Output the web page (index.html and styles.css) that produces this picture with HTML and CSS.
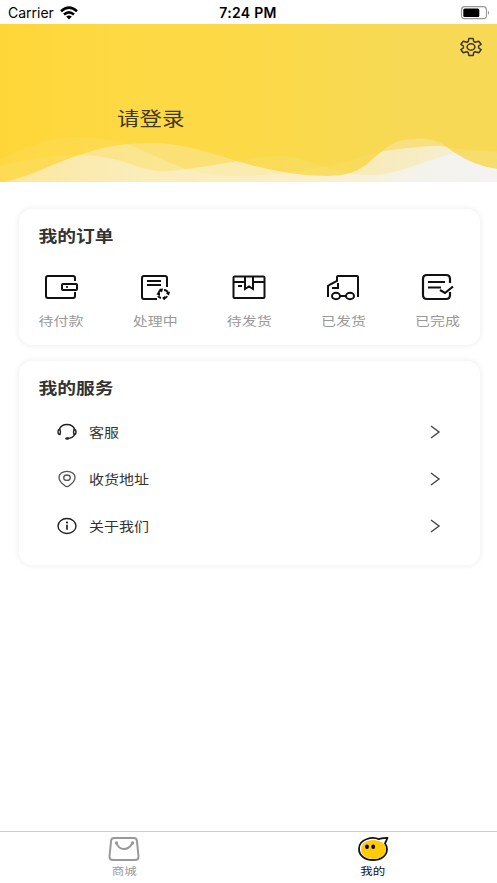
FILE: index.html
```html
<!DOCTYPE html>
<html lang="zh-CN">
<head>
<meta charset="utf-8">
<meta name="viewport" content="width=device-width, initial-scale=1">
<title>我的</title>
<link rel="stylesheet" href="styles.css">
</head>
<body>
<div class="app">
  <header class="status">
    <div class="carrier"><span>Carrier</span>
      <svg width="18" height="14" viewBox="0 0 18 14"><g fill="none" stroke="#000" stroke-width="2.6"><path d="M1 5.2Q9-1.8 17 5.2"/><path d="M4 8.500Q9 4.200 14 8.500"/></g><path d="M6.200 10.500Q9 8.400 11.800 10.500L9 13.500Z"/></svg>
    </div>
    <div class="time">7:24 PM</div>
    <div class="battery"><svg width="30" height="14" viewBox="0 0 30 14"><rect x="1.5" y=".7" width="25" height="12" rx="3.5" fill="none" stroke="#999" stroke-width="1.2"/><rect x="3.3" y="2.6" width="16" height="8.3" rx="1.5"/><path d="M28 4.700q2 2 0 4z" fill="#888"/></svg></div>
  </header>

  <section class="hero">
    <svg class="waves" viewBox="0 0 497 158" preserveAspectRatio="none">
      <defs>
        <path id="front" d="M5 158C35 151 55 138 80 131C100 123 125 119 150 119C185 119 210 129 247 140C280 149 305 152 327 152C360 152 367 139 380 129C390 119 402 115 414 115C440 112 448 126 460 132C470 138 482 143 497 145V158Z"/>
        <path id="middle" d="M0 142C25 136 50 131 77 131C95 131 115 134 133 141C145 145 152 147 165 147C190 146 210 141 233 138C250 134 262 132 279 132C300 132 310 139 325 143C340 148 355 151 370 151C395 151 410 142 447 131C463 127 480 125 497 129V158H0Z"/>
        <path id="back" d="M0 135C30 122 45 115 70 113C95 113 110 115 123 119C150 128 170 141 193 147C215 152 235 153 250 152C285 150 320 145 357 134C370 130 378 129 384 127C405 124 425 122 440 122C455 124 475 127 497 127V158H0Z"/>
        <clipPath id="inside"><use href="#front"/></clipPath>
        <linearGradient id="gb" gradientUnits="userSpaceOnUse" x1="0" x2="497" y1="0" y2="0"><stop offset="0" stop-color="#faf4df" stop-opacity=".25"/><stop offset=".3" stop-color="#faf4df" stop-opacity=".5"/><stop offset=".6" stop-color="#faf4df" stop-opacity=".5"/><stop offset=".85" stop-color="#f4f3f2" stop-opacity=".85"/><stop offset="1" stop-color="#f4f3f2" stop-opacity=".95"/></linearGradient>
        <linearGradient id="gc" gradientUnits="userSpaceOnUse" x1="0" x2="497" y1="0" y2="0"><stop offset="0" stop-color="#faf4df" stop-opacity=".04"/><stop offset=".4" stop-color="#faf4df" stop-opacity=".25"/><stop offset=".8" stop-color="#f6f2e4" stop-opacity=".6"/><stop offset="1" stop-color="#f4f3f2" stop-opacity=".8"/></linearGradient>
      </defs>
      <use href="#back" fill="#faf4df" fill-opacity=".08"/>
      <use href="#middle" fill="#faf4df" fill-opacity=".1"/>
      <use href="#front" fill="#f9f1da" fill-opacity=".33"/>
      <g clip-path="url(#inside)"><use href="#back" fill="url(#gc)"/><use href="#middle" fill="url(#gb)"/></g>
    </svg>
    <button class="settings" aria-label="设置"><svg width="24" height="20" viewBox="0 0 24 20"><g fill="none" stroke="#3f371c" stroke-width="1.5" stroke-linejoin="round"><path d="M9.800 1.500h4.400l.5 3 1.500.7 3.500-1 2.400 3.100-2.500 1.700v2l2.500 1.700-2.400 3.100-3.500-1-1.500.7-.5 3H9.800l-.5-3-1.500-.7-3.500 1-2.400-3.100 2.500-1.700V9L1.900 7.300l2.400-3.100 3.500 1 1.500-.7Z"/><ellipse cx="12" cy="10" rx="3.900" ry="3.200"/></g></svg></button>
    <div class="login">请登录</div>
  </section>

  <main>
    <section class="card orders">
      <h2>我的订单</h2>
      <div class="order-row">
        <a class="order"><svg width="36" height="30" viewBox="0 0 36 30"><g fill="none" stroke="#111" stroke-width="2"><path d="M32 9V6q0-2-2-2H5Q3 4 3 6v18q0 2 2 2h25q2 0 2-2v-4"/><rect x="19" y="12" width="15" height="6" rx="1"/></g><circle cx="24" cy="15" r="1"/></svg><span>待付款</span></a>
        <a class="order"><svg width="36" height="30" viewBox="0 0 36 30"><g fill="none" stroke="#111" stroke-width="2"><path d="M30 15V6q0-2-2-2H7Q5 4 5 6v19q0 2 2 2h13M10 9h14M10 13h14"/></g><g fill="none" stroke="#111" stroke-width="2"><path d="M21 22q1-3 3-4M27 18q3 0 4 3M30 24q-1 2.500-4 2.500M24 26q-2-.5-3-2"/></g><path d="M22 17l4-.5-1 4zM29 21.500l4-2-1 4zM28 24v4l-3-2zM19 22l4-1 0 3z"/></svg><span>处理中</span></a>
        <a class="order"><svg width="36" height="30" viewBox="0 0 36 30"><g fill="none" stroke="#111" stroke-width="2"><rect x="2.500" y="4.500" width="31" height="21.500" rx="1"/><path d="M2 10h12M22 10h12M14 4v13l4-2.500 4 2.500V4M7 14h4"/></g></svg><span>待发货</span></a>
        <a class="order"><svg width="36" height="30" viewBox="0 0 36 30"><g fill="none" stroke="#111" stroke-width="2"><path d="M3 25V14l2-1.500L12 9V5q0-1 1-1h19q1 0 1 1v20M13 11v5H7M15 24h6"/><ellipse cx="11" cy="24" rx="4" ry="3.200"/><ellipse cx="25" cy="24" rx="4" ry="3.200"/></g></svg><span>已发货</span></a>
        <a class="order"><svg width="36" height="30" viewBox="0 0 36 30"><g fill="none" stroke="#111" stroke-width="2.200"><path d="M30 11V7q0-4-4-4H7Q3 3 3 7v16q0 4 4 4h19q4 0 4-4v-3"/><path d="M8 10h17M8 15.500h13" stroke-width="1.900"/><path d="M20 18l5 3L33 14.500"/></g></svg><span>已完成</span></a>
      </div>
    </section>

    <section class="card services">
      <h2>我的服务</h2>
      <a class="service"><svg class="icon" width="22" height="18" viewBox="0 0 22 18"><g fill="none" stroke="#222" stroke-width="1.400"><path d="M3 7Q5 1.500 11 1.500T19 7M19 11Q17 15.500 11 15.500"/><path d="M4 6.500Q2 6.500 2 9t2 2.500q1-2.500 0-5zM18 6.500q2 0 2 2.500t-2 2.500q-1-2.500 0-5z"/></g><ellipse cx="11.200" cy="15.500" rx="2" ry="1.200" fill="#222"/></svg><span>客服</span><svg class="arrow" width="12" height="16" viewBox="0 0 12 16"><path d="M2 2l8 6-8 6"/></svg></a>
      <a class="service"><svg class="icon" width="22" height="18" viewBox="0 0 22 18"><g fill="none" stroke="#555" stroke-width="1.300"><path d="M11 16.700Q9.800 16.700 8 15C5.500 13 3 10.500 3 7.700C3 4 6.300 1.300 11 1.300S19 4 19 7.700C19 10.500 16.500 13 14 15Q12.200 16.700 11 16.700Z"/><ellipse cx="11" cy="7.700" rx="3.300" ry="2.700"/></g></svg><span>收货地址</span><svg class="arrow" width="12" height="16" viewBox="0 0 12 16"><path d="M2 2l8 6-8 6"/></svg></a>
      <a class="service"><svg class="icon" width="22" height="18" viewBox="0 0 22 18"><ellipse cx="11" cy="9" rx="9" ry="7.500" fill="none" stroke="#222" stroke-width="1.400"/><path d="M11 7.800v5" stroke="#222" stroke-width="1.700"/><circle cx="11" cy="5.400" r="1"/></svg><span>关于我们</span><svg class="arrow" width="12" height="16" viewBox="0 0 12 16"><path d="M2 2l8 6-8 6"/></svg></a>
    </section>
  </main>

  <nav class="tabs">
    <a class="tab"><svg width="34" height="28" viewBox="0 0 34 28"><g fill="none" stroke="#999" stroke-width="2"><path d="M7 3h20q2.500 0 2.900 2.500l1.600 16Q31.500 25 28 25H6Q2.500 25 2.500 21.500l1.600-16Q4.500 3 7 3Z"/><path d="M9.500 8Q11.500 14 17 14T25.500 8"/></g><circle cx="9.500" cy="8" r="1.700" fill="#999"/><circle cx="25.500" cy="8" r="1.700" fill="#999"/></svg><span>商城</span></a>
    <a class="tab active"><svg width="34" height="28" viewBox="0 0 34 28"><path d="M31.500 2.800Q24 3 23 4.300C20 2.800 15 2.500 11 4C6 5.500 3 9.500 3 14C3 20.500 9 25 17 25S31 20.500 31 14Q31 11 29 8.500Q30.500 5.500 31.500 2.800Z" fill="#fff" stroke="#111" stroke-width="1.800" stroke-linejoin="round"/><path d="M17 5C24 5 30 8.500 30 14.500S24.500 24 17.500 24S5 20.500 5 14.500S10 5 17 5Z" fill="#ffcb09"/><ellipse cx="11" cy="11.700" rx="1.900" ry="2.200"/><ellipse cx="17.200" cy="11.700" rx="1.900" ry="2.200"/></svg><span>我的</span></a>
  </nav>
</div>
</body>
</html>
```
FILE: styles.css
```css
* { box-sizing: border-box; }
body { margin: 0; background: #fff; color: #333; font-family: "Noto Sans CJK SC", sans-serif; }
.app { height: 883px; display: flex; flex-direction: column; overflow: hidden; }
.status { height: 24px; display: grid; grid-template-columns: 1fr auto 1fr; align-items: center; padding: 1px 7px 0 8px; color: #000; font: 14px/20px Inter, sans-serif; }
.carrier { display: flex; align-items: center; gap: 6px; }
.time { font-weight: 600; letter-spacing: .3px; margin-right: 2px; }
.battery { display: flex; justify-content: flex-end; }
svg { display: block; flex: none; }
.hero { position: relative; height: 158px; background: linear-gradient(90deg, #ffd638 0, #fdd943 25%, #fcd947 50%, #f8d955 80%, #f8d957 100%); }
.waves { position: absolute; inset: 0; width: 100%; height: 158px; }
.settings { position: absolute; top: 13px; right: 14px; padding: 0; border: 0; background: none; }
.login { position: absolute; left: 117px; top: 78px; font-size: 22.5px; line-height: 30px; color: #40381d; transform: scaleY(.85); }
main { flex: 1; padding: 27px 17px 0 19px; }
.card { border-radius: 13px; background: #fff; box-shadow: 0 0 4px 2px #f3f3f3; padding: 14px 20px 0 19.5px; }
.orders { height: 136px; margin-bottom: 16px; }
.services { height: 204px; }
h2 { margin: 0; font-size: 18.8px; line-height: 24px; font-weight: 600; transform: scaleY(.85); }
.order-row { display: flex; justify-content: space-between; margin-top: 25px; }
.order { width: 45px; display: flex; flex-direction: column; align-items: center; gap: 9px; white-space: nowrap; }
.order span { font-size: 15px; line-height: 20px; color: #999; transform: scaleY(.83); }
.service { display: flex; align-items: center; height: 47px; padding: 0 19px 0 17.5px; }
h2 + .service { margin-top: 9px; }
.service span { flex: 1; margin-left: 11px; font-size: 15px; line-height: 20px; transform: scaleY(.85); }
.arrow { fill: none; stroke: #444; stroke-width: 1.4; }
.tabs { height: 52px; display: flex; border-top: 1px solid #ccc; }
.tab { flex: 1; display: flex; flex-direction: column; align-items: center; padding-top: 3px; color: #999; }
.tab span { margin-top: -1px; font-size: 12.5px; line-height: 17px; transform: scaleY(.85); }
.active { color: #111; }
```
